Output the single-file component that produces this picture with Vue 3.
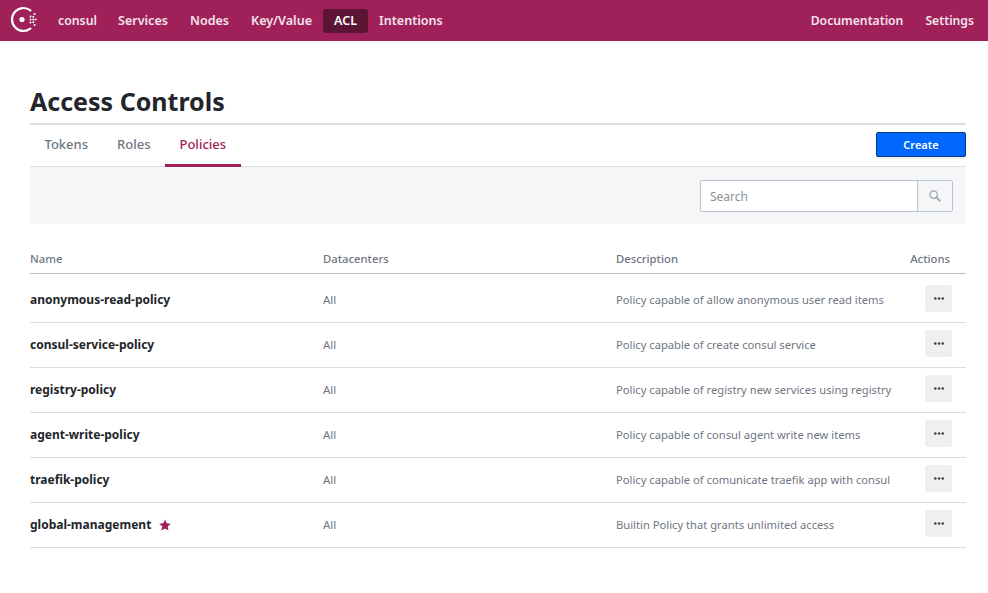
<script setup>
const navLeft = ["Services", "Nodes", "Key/Value", "ACL", "Intentions"];
const navRight = ["Documentation", "Settings"];
const tabs = ["Tokens", "Roles", "Policies"];

const policies = [
  { name: "anonymous-read-policy", desc: "Policy capable of allow anonymous user read items" },
  { name: "consul-service-policy", desc: "Policy capable of create consul service" },
  { name: "registry-policy", desc: "Policy capable of registry new services using registry" },
  { name: "agent-write-policy", desc: "Policy capable of consul agent write new items" },
  { name: "traefik-policy", desc: "Policy capable of comunicate traefik app with consul" },
  { name: "global-management", desc: "Builtin Policy that grants unlimited access", builtin: true },
];
</script>

<template>
  <div class="page">
    <header class="nav">
      <svg class="logo" width="28" height="28" viewBox="0 0 28 28">
        <path d="M20.4 4.3 A11.5 11.5 0 1 0 20.4 22.7" fill="none" stroke="#fff" stroke-width="2.2" stroke-linecap="round" />
        <circle cx="12" cy="13.5" r="2.6" fill="#fff" />
        <circle cx="20.5" cy="13.5" r="1" fill="#fff" />
        <circle cx="23.2" cy="13.5" r="1" fill="#fff" />
        <circle cx="25.6" cy="13.5" r="1" fill="#fff" />
        <circle cx="20.5" cy="10.6" r="1" fill="#fff" />
        <circle cx="20.5" cy="16.4" r="1" fill="#fff" />
        <circle cx="23.3" cy="10.8" r="1" fill="#fff" />
        <circle cx="23.3" cy="16.2" r="1" fill="#fff" />
        <circle cx="24.6" cy="8" r="1" fill="#fff" />
        <circle cx="24.6" cy="19" r="1" fill="#fff" />
      </svg>
      <span class="dc">consul</span>
      <nav class="nav-links">
        <a v-for="item in navLeft" :key="item" class="nav-link" :class="{ active: item === 'ACL' }">{{ item }}</a>
      </nav>
      <nav class="nav-links right">
        <a v-for="item in navRight" :key="item" class="nav-link">{{ item }}</a>
      </nav>
    </header>

    <main class="content">
      <h1 class="title">Access Controls</h1>
      <div class="tabs">
        <a v-for="tab in tabs" :key="tab" class="tab" :class="{ selected: tab === 'Policies' }">{{ tab }}</a>
        <button class="create">Create</button>
      </div>
      <div class="filter">
        <div class="search">
          <input class="search-input" type="text" placeholder="Search" />
          <span class="search-btn">
            <svg width="12" height="12" viewBox="0 0 12 12">
              <circle cx="4.6" cy="4.6" r="3.7" fill="none" stroke="#9aa1ab" stroke-width="1.2" />
              <path d="M7.4 7.4 L11.4 11.4" stroke="#9aa1ab" stroke-width="1.6" />
            </svg>
          </span>
        </div>
      </div>
      <table class="table">
        <thead>
          <tr>
            <th class="col">Name</th>
            <th class="col">Datacenters</th>
            <th class="col">Description</th>
            <th class="actions-head">Actions</th>
          </tr>
        </thead>
        <tbody>
          <tr v-for="p in policies" :key="p.name">
            <td class="name">
              {{ p.name }}
              <svg v-if="p.builtin" class="star" width="12" height="12" viewBox="0 0 24 24">
                <path d="M12 1 L15.4 8.6 L23.5 9.4 L17.4 15 L19.1 23 L12 18.9 L4.9 23 L6.6 15 L0.5 9.4 L8.6 8.6 Z" fill="#a0215a" />
              </svg>
            </td>
            <td class="dcs">All</td>
            <td class="desc">{{ p.desc }}</td>
            <td class="actions">
              <button class="more">
                <svg width="10" height="3" viewBox="0 0 10 3">
                  <circle cx="1.3" cy="1.5" r="1.25" fill="#3a3f46" />
                  <circle cx="5" cy="1.5" r="1.25" fill="#3a3f46" />
                  <circle cx="8.7" cy="1.5" r="1.25" fill="#3a3f46" />
                </svg>
              </button>
            </td>
          </tr>
        </tbody>
      </table>
    </main>
  </div>
</template>

<style>
body {
  margin: 0;
  background: #fff;
}
</style>

<style scoped>
.page {
  font-family: "Noto Sans", "Open Sans", sans-serif;
  color: #22252a;
}

.nav {
  height: 41px;
  background: #a0215a;
  display: flex;
  align-items: center;
  padding: 0 14px 0 10px;
  box-sizing: border-box;
  color: #f3e3ea;
  font-size: 12.3px;
  font-weight: 600;
}

.logo {
  flex-shrink: 0;
  margin-top: -1px;
}

.dc {
  margin-left: 20px;
}

.nav-links {
  display: flex;
  align-items: center;
  margin-left: 10px;
  font-size: 12.55px;
}

.nav-links.right {
  margin-left: auto;
  font-size: 12.2px;
}

.nav-link {
  padding: 0 11px;
  height: 24px;
  line-height: 23px;
  border-radius: 3px;
}

.nav-link.active {
  background: #5c1434;
  color: #fff;
}

.nav-links.right .nav-link:last-child {
  padding-right: 0;
}

.content {
  padding: 0 22px 0 30px;
}

.title {
  margin: 0;
  padding-top: 43px;
  height: 39px;
  font-size: 25px;
  line-height: 34px;
  font-weight: 700;
}

.tabs {
  display: flex;
  align-items: stretch;
  height: 41px;
  border-top: 2px solid #dce0e6;
  border-bottom: 1px solid #dce0e6;
}

.tab {
  padding: 0 14.5px;
  font-size: 13px;
  font-weight: 500;
  line-height: 38px;
  color: #6f7682;
  border-bottom: 3px solid transparent;
  margin-bottom: -1px;
}

.tab.selected {
  color: #a0215a;
  border-bottom-color: #a0215a;
}

.create {
  margin: 7px 0 0 auto;
  width: 90px;
  height: 25px;
  background: #0068ff;
  border: 1px solid #0a3a80;
  border-radius: 2px;
  color: #fff;
  font: 600 11px "Noto Sans", sans-serif;
  box-shadow: 0 2px 2px rgba(0, 0, 0, 0.08);
}

.filter {
  height: 57px;
  background: #f5f6f8;
  display: flex;
  align-items: center;
  justify-content: flex-end;
  padding-right: 13px;
}

.search {
  display: flex;
  width: 253px;
  height: 32px;
  box-sizing: border-box;
  border: 1px solid #bac1cc;
  border-radius: 2px;
  background: #fff;
}

.search-input {
  flex: 1;
  min-width: 0;
  border: 0;
  outline: 0;
  padding: 2px 9px 0;
  background: transparent;
  font: 12px "Noto Sans", sans-serif;
}

.search-input::placeholder {
  color: #8a929c;
}

.search-btn {
  width: 35px;
  box-sizing: border-box;
  background: #f5f6f8;
  border-left: 1px solid #bac1cc;
  display: flex;
  align-items: center;
  justify-content: center;
}

.table {
  margin-top: 23px;
  width: 100%;
  border-collapse: collapse;
  table-layout: fixed;
}

.col {
  width: 293px;
}

th {
  height: 26px;
  padding: 0 0 2px;
  text-align: left;
  font-size: 11.3px;
  font-weight: 500;
  color: #6f7682;
  border-bottom: 1px solid #bac1cc;
  box-sizing: border-box;
}

td {
  height: 45px;
  padding: 0;
  font-size: 11.2px;
  color: #6f7682;
  border-bottom: 1px solid #dcdee5;
  box-sizing: border-box;
  white-space: nowrap;
}

tbody tr:first-child td {
  height: 49px;
  padding-top: 4px;
}

.name {
  font-size: 12px;
  font-weight: 700;
  color: #22252a;
}

.dcs {
  font-size: 11.5px;
}

.star {
  margin-left: 5px;
  vertical-align: -2px;
}

.actions-head {
  text-align: right;
  padding-right: 16px;
}

td.actions {
  text-align: right;
  padding-right: 14px;
  padding-bottom: 3px;
}

.more {
  display: inline-flex;
  align-items: center;
  justify-content: center;
  width: 27px;
  height: 27px;
  border: 0;
  padding: 0;
  background: #efefef;
  border-radius: 2px;
  vertical-align: middle;
}
</style>
